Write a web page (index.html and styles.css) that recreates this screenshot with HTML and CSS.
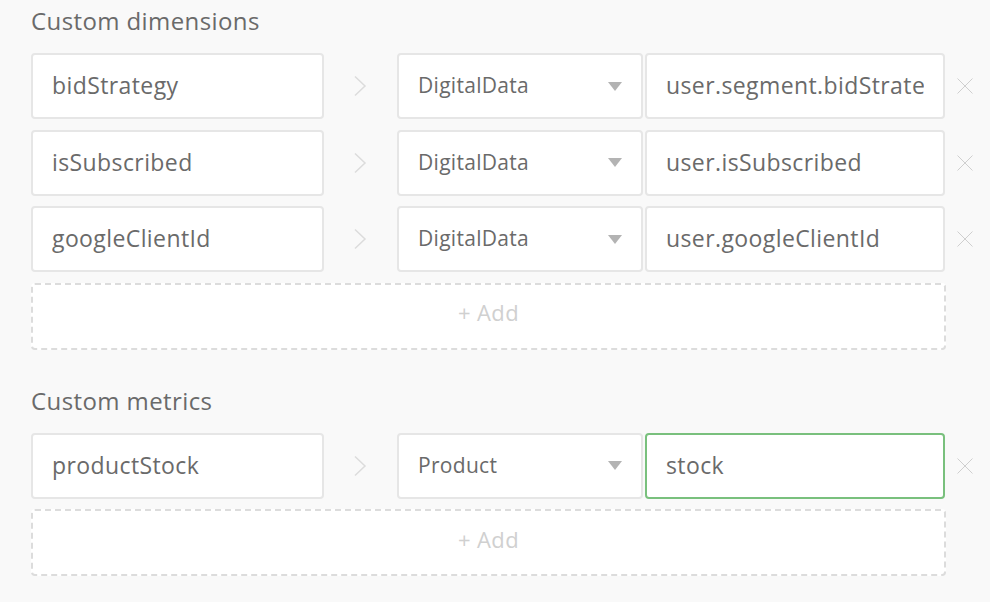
FILE: index.html
```html
<!DOCTYPE html>
<html>
<head>
<meta charset="utf-8">
<link rel="stylesheet" href="styles.css">
</head>
<body>
<div class="page">
  <section class="section">
    <h2 class="title">Custom dimensions</h2>
    <div class="rows">
      <div class="row">
        <div class="field"><span class="text">bidStrategy</span></div>
        <div class="arrow"><svg width="14" height="22" viewBox="0 0 14 22"><path d="M2 1.5 L12 11 L2 20.5" fill="none" stroke="#dcdcdc" stroke-width="1.5"/></svg></div>
        <div class="field select"><span class="text">DigitalData</span><span class="caret"></span></div>
        <div class="field value"><span class="text">user.segment.bidStrategy</span></div>
        <div class="remove"><svg width="16" height="16" viewBox="0 0 16 16"><path d="M0.5 0.5 L15.5 15.5 M15.5 0.5 L0.5 15.5" stroke="#cfcfcf" stroke-width="1"/></svg></div>
      </div>
      <div class="row">
        <div class="field"><span class="text">isSubscribed</span></div>
        <div class="arrow"><svg width="14" height="22" viewBox="0 0 14 22"><path d="M2 1.5 L12 11 L2 20.5" fill="none" stroke="#dcdcdc" stroke-width="1.5"/></svg></div>
        <div class="field select"><span class="text">DigitalData</span><span class="caret"></span></div>
        <div class="field value"><span class="text">user.isSubscribed</span></div>
        <div class="remove"><svg width="16" height="16" viewBox="0 0 16 16"><path d="M0.5 0.5 L15.5 15.5 M15.5 0.5 L0.5 15.5" stroke="#cfcfcf" stroke-width="1"/></svg></div>
      </div>
      <div class="row">
        <div class="field"><span class="text">googleClientId</span></div>
        <div class="arrow"><svg width="14" height="22" viewBox="0 0 14 22"><path d="M2 1.5 L12 11 L2 20.5" fill="none" stroke="#dcdcdc" stroke-width="1.5"/></svg></div>
        <div class="field select"><span class="text">DigitalData</span><span class="caret"></span></div>
        <div class="field value"><span class="text">user.googleClientId</span></div>
        <div class="remove"><svg width="16" height="16" viewBox="0 0 16 16"><path d="M0.5 0.5 L15.5 15.5 M15.5 0.5 L0.5 15.5" stroke="#cfcfcf" stroke-width="1"/></svg></div>
      </div>
      <div class="add">+ Add</div>
    </div>
  </section>
  <section class="section second">
    <h2 class="title">Custom metrics</h2>
    <div class="rows">
      <div class="row">
        <div class="field"><span class="text">productStock</span></div>
        <div class="arrow"><svg width="14" height="22" viewBox="0 0 14 22"><path d="M2 1.5 L12 11 L2 20.5" fill="none" stroke="#dcdcdc" stroke-width="1.5"/></svg></div>
        <div class="field select"><span class="text">Product</span><span class="caret"></span></div>
        <div class="field value focused"><span class="text">stock</span></div>
        <div class="remove"><svg width="16" height="16" viewBox="0 0 16 16"><path d="M0.5 0.5 L15.5 15.5 M15.5 0.5 L0.5 15.5" stroke="#cfcfcf" stroke-width="1"/></svg></div>
      </div>
      <div class="add">+ Add</div>
    </div>
  </section>
</div>
</body>
</html>
```
FILE: styles.css
```css
html, body {
  margin: 0;
  padding: 0;
  background: #f9f9f9;
}
body {
  font-family: "Open Sans", Lato, sans-serif;
  color: #6a6a6a;
  overflow: hidden;
}
.page {
  padding: 0 0 0 31px;
  width: 990px;
  box-sizing: border-box;
}
.section {
  display: flex;
  flex-direction: column;
}
.second {
  margin-top: 30px;
}
.title {
  margin: 0;
  font-weight: 400;
  font-size: 24px;
  letter-spacing: 0.4px;
  line-height: 42px;
  height: 42px;
  margin-top: 0;
  margin-bottom: 11px;
  color: #6a6a6a;
}
.rows {
  display: flex;
  flex-direction: column;
  gap: 10.5px;
}
.row {
  display: grid;
  grid-template-columns: 293px 73px 246px 302px 44px;
  height: 66px;
}
.field {
  background: #fff;
  border: 2px solid #e6e6e6;
  border-radius: 4px;
  box-sizing: border-box;
  height: 66px;
  display: flex;
  align-items: center;
  padding: 0 19px 2px;
  font-size: 23px;
  letter-spacing: 0.4px;
  color: #6a6a6a;
  white-space: nowrap;
  overflow: hidden;
}
.text {
  flex: 1;
  overflow: hidden;
  white-space: nowrap;
}
.select {
  padding-right: 19px;
  font-size: 21px;
  letter-spacing: 0.3px;
}
.value {
  margin-left: 2px;
  width: 300px;
}
.focused {
  border-color: #79c07d;
}
.caret {
  flex: none;
  width: 0;
  height: 0;
  margin-top: 2px;
  border-left: 7px solid transparent;
  border-right: 7px solid transparent;
  border-top: 9px solid #b3b3b3;
}
.arrow {
  display: flex;
  align-items: center;
  padding-left: 29px;
}
.arrow svg, .remove svg {
  display: block;
}
.remove {
  display: flex;
  align-items: center;
  padding-left: 12px;
}
.add {
  width: 915px;
  height: 67px;
  box-sizing: border-box;
  border: 2px dashed #dcdcdc;
  border-radius: 4px;
  background: #fff;
  display: flex;
  align-items: center;
  justify-content: center;
  padding-bottom: 8px;
  font-size: 22px;
  letter-spacing: 0.4px;
  color: #d0d0d0;
}
```
